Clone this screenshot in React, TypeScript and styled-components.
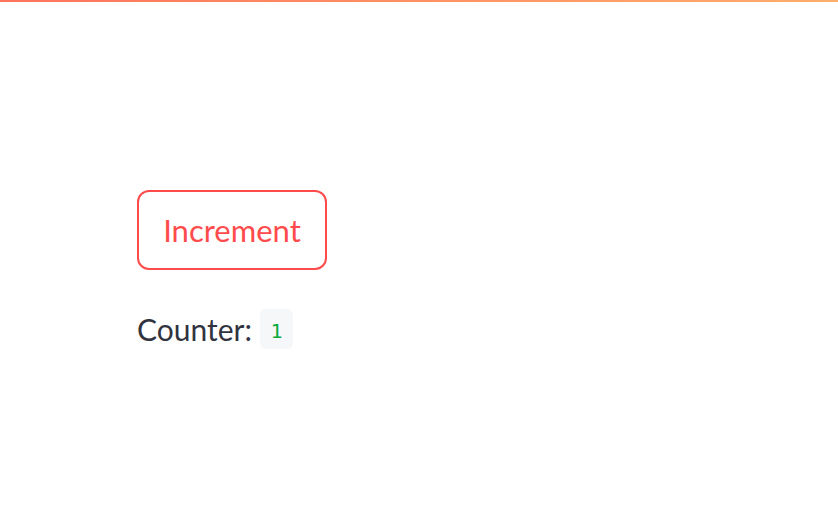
import React, { useState } from "react";
import styled, { createGlobalStyle } from "styled-components";

const Global = createGlobalStyle`
  html, body { margin: 0; padding: 0; background: #fff; }
  body { font-family: Lato, "Noto Sans", sans-serif; color: rgb(49, 51, 63); }
`;

const Decoration = styled.div`
  height: 2px;
  background: linear-gradient(90deg, #fd735c, #fdae6c);
`;

const Main = styled.main`
  display: flex;
  flex-direction: column;
  align-items: flex-start;
  padding: 188px 0 0 137px;
  gap: 39px;
`;

const Button = styled.button`
  height: 80px;
  width: 190px;
  border: 2px solid #ff4b4b;
  border-radius: 12px;
  background: #fff;
  color: #ff4b4b;
  font-family: Lato, "Noto Sans", sans-serif;
  font-size: 31px;
  padding: 0;
  cursor: pointer;
`;

const Line = styled.p`
  margin: 0;
  display: flex;
  align-items: center;
  gap: 8px;
  font-size: 30px;
  line-height: 40px;
`;

const Code = styled.code`
  display: inline-flex;
  align-items: center;
  justify-content: center;
  box-sizing: border-box;
  width: 33px;
  height: 40px;
  padding-top: 4px;
  border-radius: 6px;
  background: #f6f7f9;
  color: #09ab3b;
  font-family: "DejaVu Sans Mono", monospace;
  font-size: 20px;
`;

export default function App() {
  const [count, setCount] = useState(1);
  return (
    <>
      <Global />
      <Decoration />
      <Main>
        <Button onClick={() => setCount(count + 1)}>Increment</Button>
        <Line>
          Counter: <Code>{count}</Code>
        </Line>
      </Main>
    </>
  );
}
